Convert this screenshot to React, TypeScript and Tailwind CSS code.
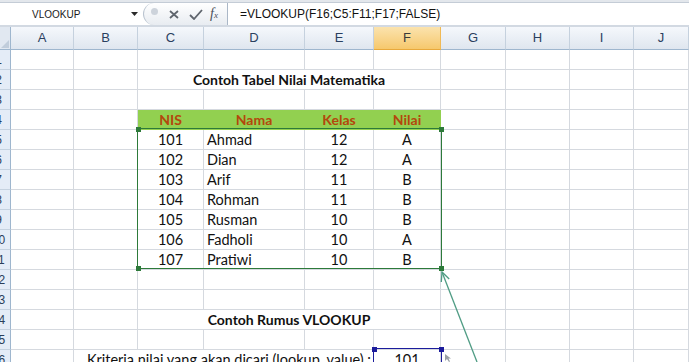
import React from "react";

const GRID =
  "grid grid-cols-[11px_63px_64px_66px_101px_69px_67px_65px_64px_64px_1fr]";

const COLS = ["A", "B", "C", "D", "E", "F", "G", "H", "I", "J"];

const DATA = [
  ["101", "Ahmad", "12", "A"],
  ["102", "Dian", "12", "A"],
  ["103", "Arif", "11", "B"],
  ["104", "Rohman", "11", "B"],
  ["105", "Rusman", "10", "B"],
  ["106", "Fadholi", "10", "A"],
  ["107", "Pratiwi", "10", "B"],
];

function Cell({
  children,
  className = "",
}: {
  children?: React.ReactNode;
  className?: string;
}) {
  return (
    <div
      className={`h-[20px] border-r border-b border-[#d5d9df] flex items-center overflow-hidden whitespace-nowrap ${className}`}
    >
      {children}
    </div>
  );
}

function RowHeader({ n }: { n: number }) {
  return (
    <div className="h-[20px] flex items-center overflow-hidden bg-[#e4ecf7] border-r border-b border-r-[#9eb6ce] border-b-[#c5d2e0]">
      <div className="w-[25px] -ml-[14px] shrink-0 text-center text-[12px] text-[#2b3e5a] font-['Liberation_Sans',sans-serif]">
        {n}
      </div>
    </div>
  );
}

function Empty({ n }: { n: number }) {
  return (
    <>
      {Array.from({ length: n }).map((_, i) => (
        <Cell key={i} />
      ))}
    </>
  );
}

function Row({ r }: { r: number }) {
  let body: React.ReactNode;
  if (r === 2 || r === 14) {
    body = (
      <>
        <Empty n={2} />
        <Cell className="col-span-4 justify-center font-bold text-[14px]">
          {r === 2 ? "Contoh Tabel Nilai Matematika" : "Contoh Rumus VLOOKUP"}
        </Cell>
        <Empty n={4} />
      </>
    );
  } else if (r === 4) {
    body = (
      <>
        <Empty n={2} />
        {["NIS", "Nama", "Kelas", "Nilai"].map((h) => (
          <Cell
            key={h}
            className="justify-center font-bold text-[14px] bg-[#92d050] border-r-[#92d050] border-b-[#92d050] text-[#b4470d]"
          >
            {h}
          </Cell>
        ))}
        <Empty n={4} />
      </>
    );
  } else if (r >= 5 && r <= 11) {
    const d = DATA[r - 5];
    body = (
      <>
        <Empty n={2} />
        <Cell className="justify-center">{d[0]}</Cell>
        <Cell className="pl-[3px]">{d[1]}</Cell>
        <Cell className="justify-center">{d[2]}</Cell>
        <Cell className="justify-center">{d[3]}</Cell>
        <Empty n={4} />
      </>
    );
  } else if (r === 16) {
    body = (
      <>
        <Empty n={1} />
        <Cell className="col-span-4 justify-end pr-[2px]">
          Kriteria nilai yang akan dicari (lookup_value) :
        </Cell>
        <Cell className="justify-center">101</Cell>
        <Empty n={4} />
      </>
    );
  } else {
    body = <Empty n={10} />;
  }
  return (
    <>
      <RowHeader n={r} />
      {body}
    </>
  );
}

function FormulaBar() {
  return (
    <div className="h-[27px] flex flex-col">
      <div className="h-[2px] bg-[#e3e7ec]" />
      <div className="h-[1px] bg-[#c4ccd6]" />
      <div className="flex-1 flex bg-white">
        <div className="w-[143px] flex items-center">
          <span className="pl-[32px] text-[10px] text-[#1a1a1a] font-['Liberation_Sans',sans-serif]">
            VLOOKUP
          </span>
          <svg className="ml-auto mr-[5px]" width="7" height="4" viewBox="0 0 7 4">
            <path d="M0 0H7L3.5 4Z" fill="#2a2a2a" />
          </svg>
        </div>
        <div className="w-[84px] flex items-center rounded-l-[11px] border-l border-[#b9c3cf] bg-linear-to-b from-white to-[#e8ecf1]">
          <div className="ml-[7px] self-start mt-[5px] w-[7px] h-[7px] rounded-full bg-[#cdd3db]" />
          <svg className="ml-[11px]" width="10" height="9" viewBox="0 0 10 9">
            <path d="M1 1L9 8M9 1L1 8" stroke="#5f656d" strokeWidth="1.8" />
          </svg>
          <svg className="ml-[10px]" width="14" height="11" viewBox="0 0 14 11">
            <path d="M1 6L5 10L13 1" stroke="#5f656d" strokeWidth="1.8" fill="none" />
          </svg>
          <span className="ml-[7px] italic text-[14px] leading-none text-[#4a4f57] font-['Liberation_Serif',serif]">
            f<span className="text-[9px]">x</span>
          </span>
        </div>
        <div className="flex-1 flex items-center border-l border-[#aab7c7] pl-[12px] text-[12px] text-[#111] font-['Liberation_Sans',sans-serif]">
          =VLOOKUP(F16;C5:F11;F17;FALSE)
        </div>
      </div>
      <div className="h-[2px] bg-[#d2d9e2]" />
    </div>
  );
}

function ColumnHeaders() {
  return (
    <>
      <div className="h-[23px] bg-[#e1e8f1] border-r border-b border-[#9eb6ce] flex items-end justify-end">
        <svg width="8" height="8" viewBox="0 0 8 8" className="mr-[1px] mb-[1px]">
          <path d="M8 0V8H0Z" fill="#c1cddb" />
        </svg>
      </div>
      {COLS.map((c) =>
        c === "F" ? (
          <div
            key={c}
            className="h-[23px] flex items-center justify-center border-r border-b border-r-[#f0b955] border-b-[#e8a93c] bg-linear-to-b from-[#fbe3ad] to-[#f6c86c] text-[13px] text-[#3b3b3b] font-['Liberation_Sans',sans-serif]"
          >
            {c}
          </div>
        ) : (
          <div
            key={c}
            className="h-[23px] flex items-center justify-center border-r border-b border-r-[#c5d1de] border-b-[#9eb6ce] bg-linear-to-b from-[#f5f8fc] to-[#dfe6ef] text-[13px] text-[#2a3f5f] font-['Liberation_Sans',sans-serif]"
          >
            {c}
          </div>
        )
      )}
    </>
  );
}

function Handle({ x, y, color }: { x: number; y: number; color: string }) {
  return (
    <div
      className="absolute w-[5px] h-[5px]"
      style={{ left: x - 2, top: y - 2, background: color }}
    />
  );
}

export default function App() {
  const rows = Array.from({ length: 16 }, (_, i) => i + 1);
  return (
    <div className="w-[689px] h-[362px] overflow-hidden bg-white relative font-[Lato,sans-serif] text-[14.5px] text-[#111]">
      <FormulaBar />
      <div className={GRID}>
        <ColumnHeaders />
        {rows.map((r) => (
          <Row key={r} r={r} />
        ))}
      </div>

      {/* range highlight C5:F11 */}
      <div className="absolute left-[137px] top-[128px] w-[305px] h-[141px] border border-[#2d7a3a]" />
      <Handle x={138} y={129} color="#2d7a3a" />
      <Handle x={441} y={129} color="#2d7a3a" />
      <Handle x={138} y={268} color="#2d7a3a" />
      <Handle x={441} y={268} color="#2d7a3a" />

      {/* range highlight F16 */}
      <div className="absolute left-[373px] top-[348px] w-[69px] h-[21px] border border-[#1c1c9c]" />
      <Handle x={374} y={349} color="#1c1c9c" />
      <Handle x={441} y={349} color="#1c1c9c" />

      <svg className="absolute left-0 top-0 pointer-events-none" width="689" height="362">
        <line x1="477" y1="362" x2="442" y2="272" stroke="#4f9c84" strokeWidth="1.3" />
        <polyline points="441.3,282 442,272 449.2,279" stroke="#4f9c84" strokeWidth="1.3" fill="none" />
        <path d="M445 354L445 361L447 359L449 362L450 361.5L448.5 358.5L451 358.5Z" fill="#9aa0a6" />
      </svg>
    </div>
  );
}
